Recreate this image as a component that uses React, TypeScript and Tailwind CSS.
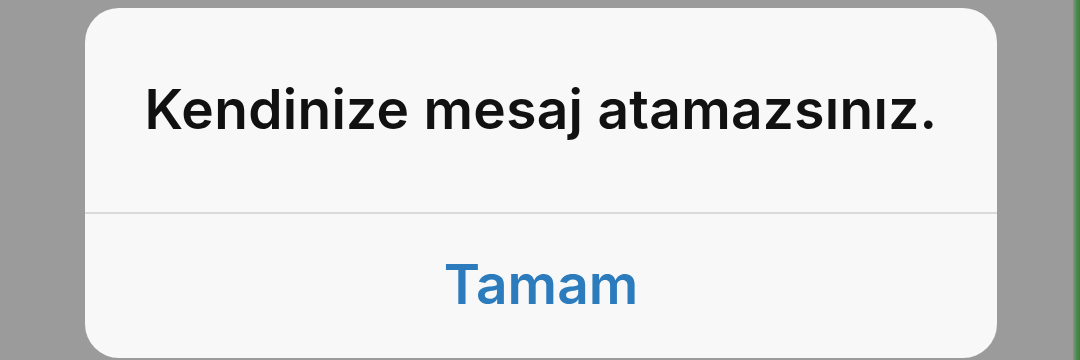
import React from 'react';

const App: React.FC = () => {
  return (
    <div className="w-[1080px] h-[360px] bg-[#9b9b9b] flex overflow-hidden" style={{ fontFamily: 'Inter, "Liberation Sans", sans-serif' }}>
      {/* Alert card */}
      <div className="ml-[85px] mt-[8px] w-[912px] h-[350px] rounded-[34px] bg-[#f8f8f8] flex flex-col">
        <div className="h-[204px] flex items-center justify-center pb-[2px]">
          <p className="text-[55px] font-semibold text-[#111111] tracking-[0.3px] leading-none">
            Kendinize mesaj atamazsınız.
          </p>
        </div>
        <div className="h-[2px] bg-[#dadada]" />
        <div className="flex-1 flex items-center justify-center pb-[4px]">
          <span className="text-[55px] font-semibold text-[#2b7bbd] leading-none">Tamam</span>
        </div>
      </div>
      <div className="flex-1" />
      {/* edge strip */}
      <div className="w-[7px] h-full bg-gradient-to-r from-[#7f9c7f] via-[#4e8a4e] to-[#3f7a3f]" />
    </div>
  );
};

export default App;
